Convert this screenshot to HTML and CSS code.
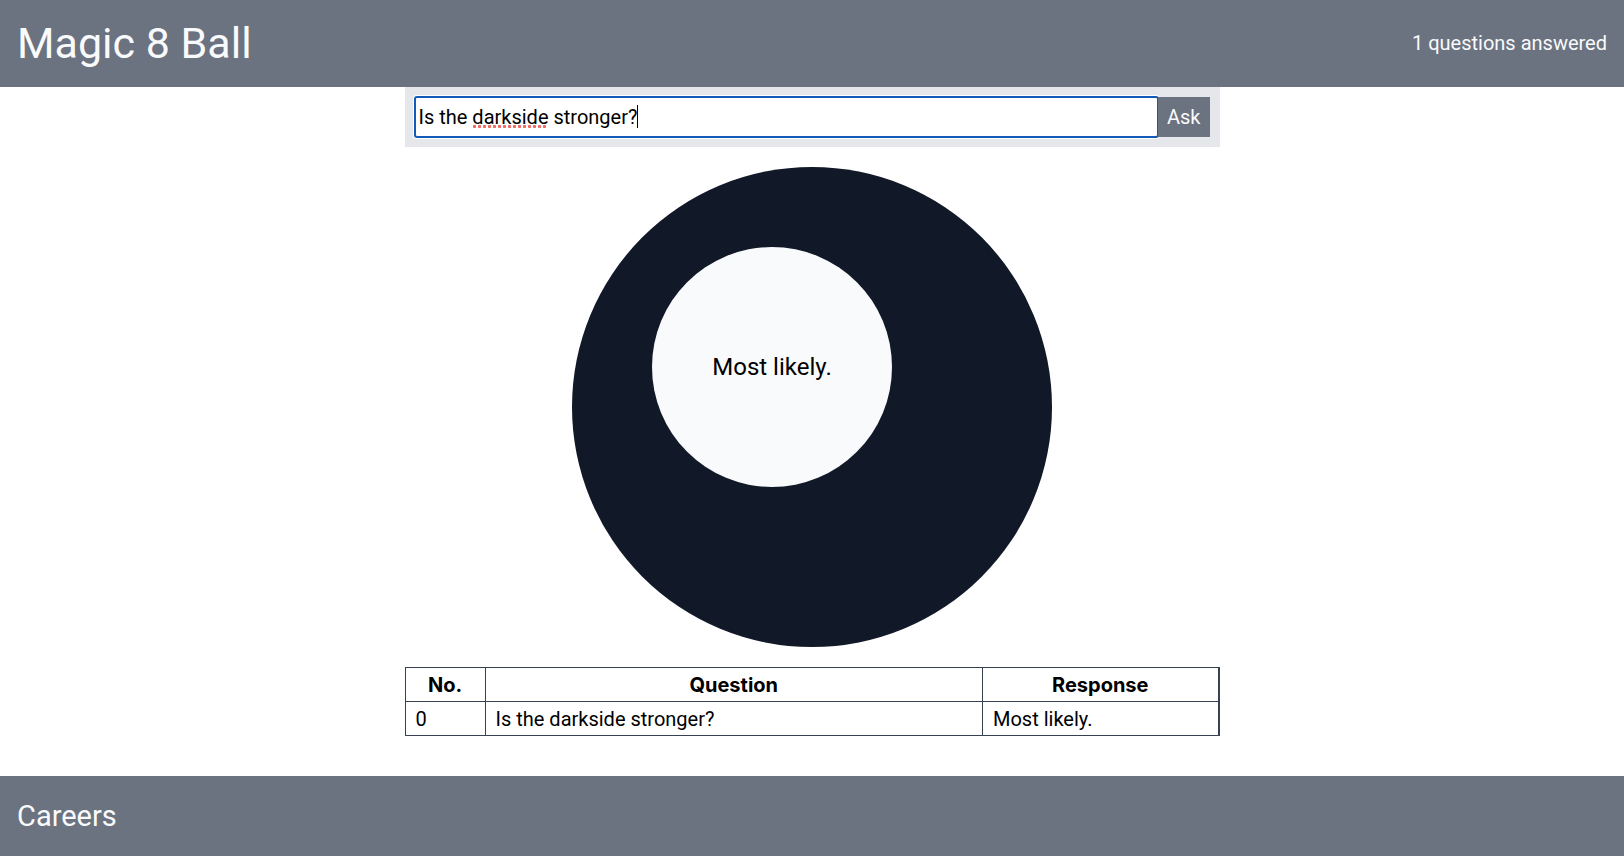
FILE: index.html
```html
<!DOCTYPE html>
<html lang="en">
<head>
<meta charset="utf-8">
<title>Magic 8 Ball</title>
<link rel="stylesheet" href="styles.css">
</head>
<body>
<header class="header">
  <h1 class="title">Magic 8 Ball</h1>
  <p class="count">1 questions answered</p>
</header>
<main class="main">
  <form class="ask-form">
    <div class="field">
      <input class="question" type="text" name="question" aria-label="Question" spellcheck="false" value="Is the darkside stronger?">
      <span class="misspelling"></span>
      <span class="caret"></span>
    </div>
    <button class="ask" type="button">Ask</button>
  </form>
  <div class="ball">
    <div class="window"><p class="answer">Most likely.</p></div>
  </div>
  <table class="history">
    <thead>
      <tr><th class="col-no">No.</th><th class="col-question">Question</th><th class="col-response">Response</th></tr>
    </thead>
    <tbody>
      <tr><td>0</td><td>Is the darkside stronger?</td><td>Most likely.</td></tr>
    </tbody>
  </table>
</main>
<footer class="footer"><a class="careers" href="#">Careers</a></footer>
</body>
</html>
```
FILE: styles.css
```css
* { box-sizing: border-box; margin: 0; }

body {
  min-height: 100vh;
  display: flex;
  flex-direction: column;
  background: #fff;
  color: #000;
  font: 20px/30px Roboto, "Liberation Sans", sans-serif;
}

.header {
  display: flex;
  align-items: center;
  justify-content: space-between;
  padding: 18px 17px 19px;
  background: #6b7280;
  color: #f9fafb;
}
.title { font-size: 43px; line-height: 50px; font-weight: 400; }

.main {
  flex: 1;
  width: 815px;
  max-width: 100%;
  margin: 0 auto;
  display: flex;
  flex-direction: column;
  align-items: center;
  gap: 20px;
}

.ask-form {
  width: 100%;
  display: flex;
  padding: 10px;
  background: #e5e7eb;
}
.field { position: relative; flex: 1; }
.question {
  display: block;
  width: 100%;
  height: 40px;
  padding: 0 3px;
  border: 1px solid #1259b8;
  border-radius: 2px;
  outline: none;
  background: #fff;
  box-shadow: 0 0 0 1px #1259b8, 0 0 0 2px #fff;
  color: inherit;
  font: inherit;
}
.misspelling {
  position: absolute;
  left: 57px;
  top: 28px;
  width: 75px;
  height: 3px;
  background: radial-gradient(circle, #ee6a62 1px, #f3a09a 2px, transparent 2px) 0 0 / 5px 3px;
}
.caret {
  position: absolute;
  left: 222px;
  top: 8px;
  width: 1px;
  height: 23px;
  background: #000;
}
.ask {
  position: relative;
  height: 40px;
  padding: 0 9px;
  border: 0;
  background: #6b7280;
  color: #f9fafb;
  font: inherit;
}

.ball {
  width: 480px;
  height: 480px;
  padding: 80px;
  border-radius: 50%;
  background: #111827;
}
.window {
  width: 240px;
  height: 240px;
  display: flex;
  align-items: center;
  justify-content: center;
  border-radius: 50%;
  background: #f9fafb;
}
.answer { font-size: 24px; line-height: 35px; }

.history {
  width: 100%;
  table-layout: fixed;
  border-collapse: collapse;
  border: 1px solid #374151;
  border-right-width: 2px;
}
.history th, .history td {
  height: 34px;
  padding: 1px 10px;
  border: 1px solid #374151;
  text-align: left;
}
.history th { text-align: center; font-family: Inter, "Liberation Sans", sans-serif; font-weight: 700; }
.col-no { width: 80px; }
.col-response { width: 236px; }

.footer { padding: 20px 17px; background: #6b7280; line-height: 40px; }
.careers { display: inline-block; color: #f9fafb; font-size: 29px; line-height: 40px; text-decoration: none; vertical-align: top; }
```
